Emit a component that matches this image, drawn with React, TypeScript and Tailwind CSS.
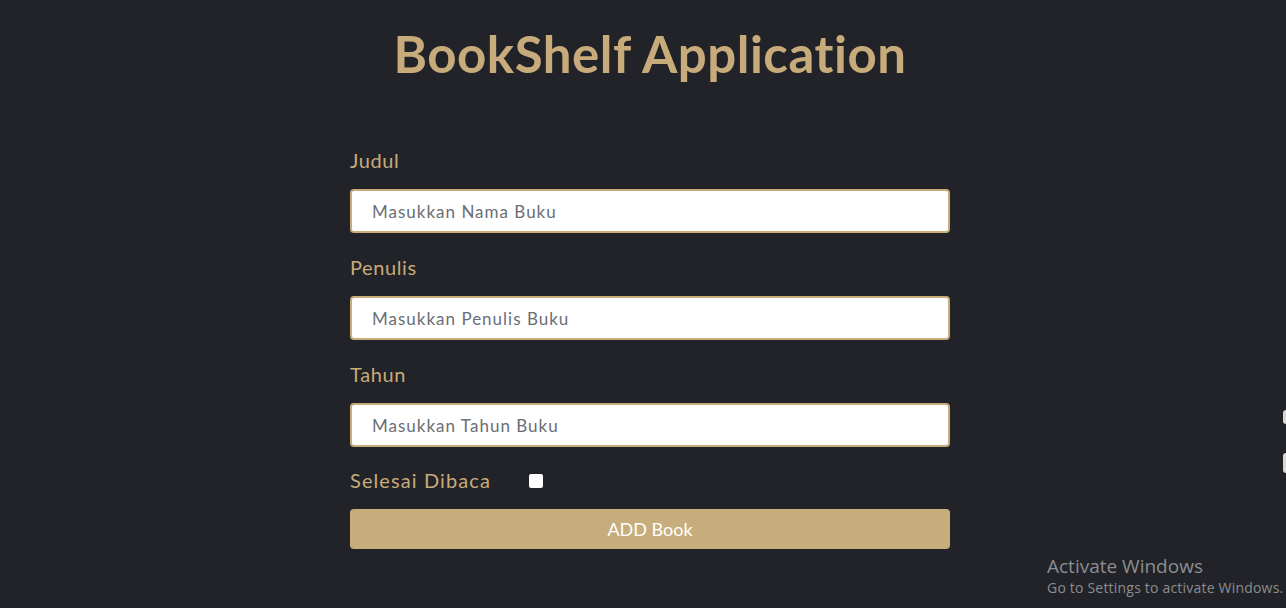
import { useState } from 'react';

const font = { fontFamily: 'Lato, "Noto Sans", sans-serif' };

function Field({ label, placeholder }: { label: string; placeholder: string }) {
  return (
    <div className="flex flex-col">
      <label className="text-[20px] leading-[24px] tracking-[0.6px] text-[#c8ab7a] mb-[17px]">{label}</label>
      <input
        type="text"
        placeholder={placeholder}
        className="h-[44px] w-full rounded-[4px] border-2 border-[#c8ab7a] bg-white px-[20px] text-[17px] tracking-[1px] text-gray-700 placeholder:text-[#6b6e75] outline-none"
      />
    </div>
  );
}

export default function App() {
  const [done, setDone] = useState(false);

  return (
    <div className="relative min-h-[608px] w-full overflow-hidden bg-[#212328]" style={font}>
      <div className="flex flex-col items-center pl-[14px]">
        <h1 className="mt-[26px] text-[51px] leading-[56px] tracking-[0.5px] font-bold text-[#c8ab7a]">BookShelf Application</h1>

        <form className="mt-[66px] flex w-[600px] flex-col gap-[22px]" onSubmit={(e) => e.preventDefault()}>
          <Field label="Judul" placeholder="Masukkan Nama Buku" />
          <Field label="Penulis" placeholder="Masukkan Penulis Buku" />
          <Field label="Tahun" placeholder="Masukkan Tahun Buku" />

          <div className="-mt-[1px] flex items-center gap-[38px]">
            <span className="text-[20px] leading-[24px] tracking-[1.1px] text-[#c8ab7a]">Selesai Dibaca</span>
            <input
              type="checkbox"
              checked={done}
              onChange={(e) => setDone(e.target.checked)}
              className="mt-[1px] h-[14px] w-[14px] appearance-none rounded-[2px] bg-white"
            />
          </div>

          <button
            type="submit"
            className="-mt-[5px] h-[40px] w-full rounded-[4px] bg-[#c7ad7c] text-[18px] text-white"
          >
            ADD Book
          </button>
        </form>
      </div>

      {/* cut-off shapes at right edge */}
      <div className="absolute right-0 top-[410px] h-[14px] w-[3px] rounded-l-full bg-[#d8d8d8]" />
      <div className="absolute right-0 top-[453px] h-[20px] w-[3px] rounded-l-full bg-[#d8d8d8]" />

      {/* Windows watermark */}
      <div
        className="absolute left-[1047px] top-[554px] text-[#8b8d91]"
        style={{ fontFamily: '"Open Sans", "Noto Sans", sans-serif' }}
      >
        <div className="text-[19px] leading-[24px]">Activate Windows</div>
        <div className="text-[14px] leading-[20px] tracking-[0.2px] whitespace-nowrap">Go to Settings to activate Windows.</div>
      </div>
    </div>
  );
}
